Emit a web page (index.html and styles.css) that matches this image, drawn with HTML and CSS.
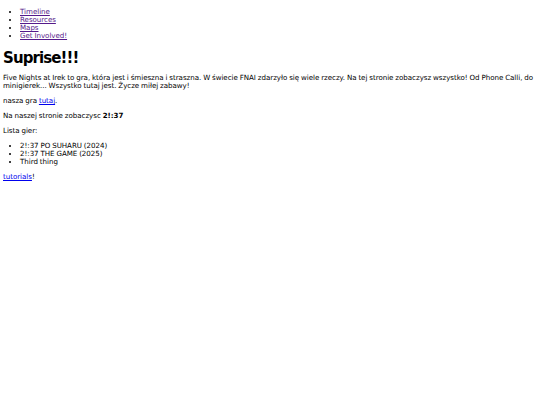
FILE: index.html
```html
<!DOCTYPE html>
<html lang="pl">
<head>
<meta charset="utf-8">
<title>Suprise!!!</title>
<link rel="stylesheet" href="styles.css">
</head>
<body>
<ul class="nav">
<li><a class="visited" href="#">Timeline</a></li>
<li><a class="visited" href="#">Resources</a></li>
<li><a class="visited" href="#">Maps</a></li>
<li><a class="visited" href="#">Get Involved!</a></li>
</ul>
<h1 class="title">Suprise!!!</h1>
<p>Five Nights at Irek to gra, która jest i śmieszna i straszna. W świecie FNAI zdarzyło się wiele rzeczy. Na tej stronie zobaczysz wszystko! Od Phone Calli, do minigierek... Wszystko tutaj jest. Życze miłej zabawy!</p>
<p>nasza gra <a class="link" href="#">tutaj</a>.</p>
<p>Na naszej stronie zobaczysc <b>2!:37</b></p>
<p>Lista gier:</p>
<ul class="games">
<li>2!:37 PO SUHARU (2024)</li>
<li>2!:37 THE GAME (2025)</li>
<li>Third thing</li>
</ul>
<p><a class="link" href="#">tutorials</a>!</p>
</body>
</html>
```
FILE: styles.css
```css
html { background: #fff; }
body {
  margin: 0 0 4px 3px;
  font-family: "DejaVu Sans", Verdana, sans-serif;
  font-size: 7.1px;
  line-height: 8px;
  letter-spacing: -0.04px;
  word-spacing: -0.3px;
  color: #000;
}
ul { margin: 7px 0; padding-left: 17px; }
.nav { margin-top: 8px; margin-bottom: 9px; }
p { margin: 7px 0; }
.title {
  font-size: 15px;
  line-height: 17px;
  margin: 10px 0 4px;
  font-weight: bold;
  letter-spacing: -0.9px;
  word-spacing: 0;
}
.visited { color: #551a8b; }
.link { color: #0000ee; }
```
